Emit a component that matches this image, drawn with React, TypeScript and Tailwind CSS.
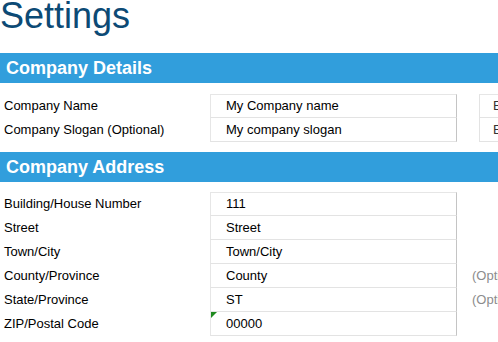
import React from 'react';

const font = { fontFamily: '"Liberation Sans", Arial, sans-serif' };

type Row = { label: string; value: string; note?: string; extra?: string; mark?: boolean };

const details: Row[] = [
    { label: 'Company Name', value: 'My Company name', extra: 'Enter your company name' },
    { label: 'Company Slogan (Optional)', value: 'My company slogan', extra: 'Enter your company slogan' },
];

const address: Row[] = [
    { label: 'Building/House Number', value: '111' },
    { label: 'Street', value: 'Street' },
    { label: 'Town/City', value: 'Town/City' },
    { label: 'County/Province', value: 'County', note: '(Optional)' },
    { label: 'State/Province', value: 'ST', note: '(Optional)' },
    { label: 'ZIP/Postal Code', value: '00000', mark: true },
];

function SectionBar({ title }: { title: string }) {
    return (
        <div className="h-[30px] w-[760px] shrink-0 bg-[#319edc] pl-[6px] flex items-center text-[18px] font-bold text-white leading-none">
            {title}
        </div>
    );
}

function Rows({ rows }: { rows: Row[] }) {
    return (
        <div className="flex flex-col w-[760px]">
            {rows.map((r, i) => (
                <div key={r.label} className="flex h-[24px] items-center">
                    <div className="w-[210px] shrink-0 pl-[4px] text-[13px] text-black whitespace-nowrap">{r.label}</div>
                    <div
                        className={`relative w-[247px] shrink-0 h-full flex items-center pl-[15px] text-[13px] text-black border-l border-r border-b border-l-[#e6e6e6] border-r-[#c4c4c4] border-b-[#e3e3e3] ${
                            i === 0 ? 'border-t border-t-[#e6e6e6]' : ''
                        }`}
                    >
                        {r.mark && (
                            <span className="absolute left-0 top-0 w-0 h-0 border-t-[6px] border-r-[6px] border-t-[#1e8a1e] border-r-transparent" />
                        )}
                        {r.value}
                    </div>
                    {r.extra ? (
                        <div
                            className={`ml-[22px] w-[240px] shrink-0 h-full flex items-center pl-[13px] text-[13px] text-[#333] whitespace-nowrap border-l border-b border-l-[#e3e3e3] border-b-[#e3e3e3] ${
                                i === 0 ? 'border-t border-t-[#e6e6e6]' : ''
                            }`}
                        >
                            {r.extra}
                        </div>
                    ) : r.note ? (
                        <div className="ml-[15px] shrink-0 text-[13px] text-[#8c8c8c] whitespace-nowrap">{r.note}</div>
                    ) : null}
                </div>
            ))}
        </div>
    );
}

export default function App() {
    return (
        <div className="w-[498px] h-[342px] overflow-hidden bg-white" style={font}>
            <h1 className="text-[36px] leading-[32px] text-[#0c4a75] font-normal mb-[21px] whitespace-nowrap">Settings</h1>
            <SectionBar title="Company Details" />
            <div className="mt-[11px] mb-[10px]">
                <Rows rows={details} />
            </div>
            <SectionBar title="Company Address" />
            <div className="mt-[10px]">
                <Rows rows={address} />
            </div>
        </div>
    );
}
